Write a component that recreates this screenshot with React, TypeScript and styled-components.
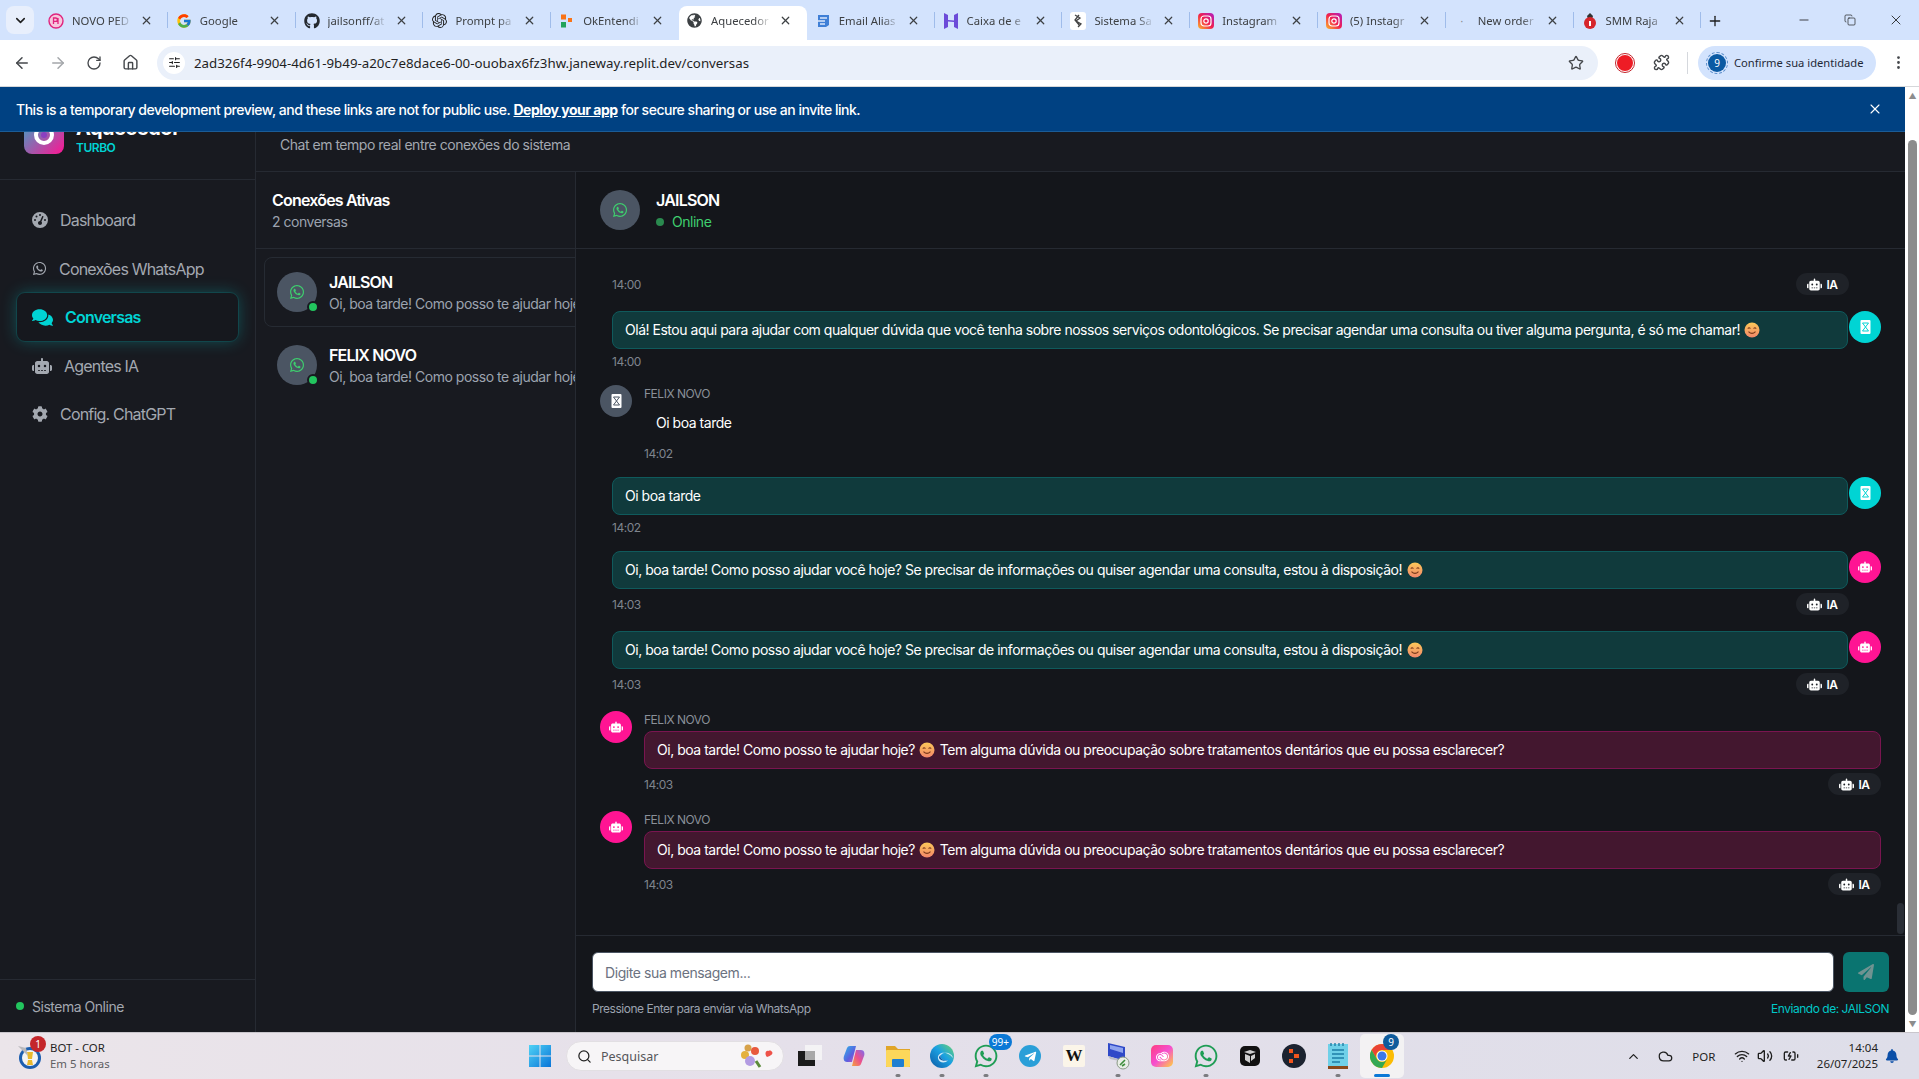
import { ReactNode } from "react"
import styled, { createGlobalStyle } from "styled-components"
import {
  ArrowLeft, ArrowRight, RotateCw, Home, Star, Puzzle, MoreVertical, SlidersHorizontal,
  X, Plus, ChevronDown, ChevronUp, Minus, Copy, Search, Cloud, Wifi, Volume2, BatteryCharging,
} from "lucide-react"
import {
  FaWhatsapp, FaComments, FaCog, FaPaperPlane, FaGithub,
  FaGlobeAmericas, FaTelegramPlane, FaBell,
} from "react-icons/fa"
import { FaGaugeHigh, FaRobot } from "react-icons/fa6"
import { FcGoogle } from "react-icons/fc"
import { SiOpenai, SiAdobecreativecloud } from "react-icons/si"

const UI = `"Noto Sans", "Open Sans", sans-serif`
// Inter runs wider here than in the capture, tighten it to the same line lengths
const TIGHT = "-0.03em"
const TIGHTER = "-0.05em"

const GlobalStyle = createGlobalStyle`
  html, body { margin: 0; padding: 0; height: 100%; overflow: hidden; background: #14161b; }
  body { font-family: Inter, "Liberation Sans", sans-serif; }
  * { box-sizing: border-box; }
`

const Window = styled.div`
  width: 1919px;
  height: 1079px;
  display: flex;
  flex-direction: column;
  overflow: hidden;
`

/* ---- browser chrome ---- */
const TabStrip = styled.div`
  height: 40px;
  flex: none;
  background: #d3e3fd;
  display: flex;
  align-items: flex-end;
  font-family: ${UI};
`
const TabMenu = styled.div`
  width: 28px;
  height: 28px;
  flex: none;
  margin: 0 6px 6px;
  border-radius: 8px;
  background: #e8effc;
  display: flex;
  align-items: center;
  justify-content: center;
  color: #1f1f1f;
`
const Tab = styled.div<{ $active?: boolean; $sep?: boolean }>`
  position: relative;
  flex: none;
  width: 127.8px;
  min-width: 0;
  height: 34px;
  padding: 0 15px 5px 8px;
  display: flex;
  align-items: center;
  gap: 8px;
  border-radius: 8px 8px 0 0;
  background: ${(p) => (p.$active ? "#fff" : "transparent")};
  &::after {
    content: "";
    display: ${(p) => (p.$sep ? "block" : "none")};
    position: absolute;
    right: 0;
    top: 6px;
    width: 1px;
    height: 16px;
    background: #9fbcea;
  }
`
const TabIcon = styled.span`
  width: 16px;
  height: 16px;
  flex: none;
  display: flex;
  align-items: center;
  justify-content: center;
`
const TabTitle = styled.span`
  flex: 1;
  min-width: 0;
  overflow: hidden;
  white-space: nowrap;
  font-size: 11.3px;
  color: #3d4043;
  -webkit-mask-image: linear-gradient(90deg, #000 72%, transparent 100%);
  mask-image: linear-gradient(90deg, #000 72%, transparent 100%);
`
const NewTab = styled.div`
  width: 28px;
  height: 34px;
  flex: none;
  padding-bottom: 5px;
  display: flex;
  align-items: center;
  justify-content: center;
  color: #1f1f1f;
`
const WindowControls = styled.div`
  margin-left: auto;
  height: 40px;
  flex: none;
  display: flex;
  color: #1f1f1f;
`
const WindowButton = styled.div`
  width: 46px;
  display: flex;
  align-items: center;
  justify-content: center;
`

const Toolbar = styled.div`
  height: 47px;
  flex: none;
  background: #fff;
  border-bottom: 1px solid #d5d7da;
  display: flex;
  align-items: center;
  padding: 0 3px 1px 4px;
  font-family: ${UI};
`
const ToolButton = styled.div<{ $dim?: boolean }>`
  width: 36px;
  height: 34px;
  flex: none;
  display: flex;
  align-items: center;
  justify-content: center;
  color: ${(p) => (p.$dim ? "#a4a7ab" : "#45484c")};
`
const Omnibox = styled.div`
  flex: 1;
  height: 34px;
  margin: 0 9px;
  border-radius: 17px;
  background: #eaf0fa;
  display: flex;
  align-items: center;
  padding: 0 14px 0 6px;
  gap: 9px;
`
const SiteChip = styled.div`
  width: 22px;
  height: 22px;
  border-radius: 50%;
  background: #fff;
  display: flex;
  align-items: center;
  justify-content: center;
  color: #1f1f1f;
`
const Url = styled.span`
  flex: 1;
  font-size: 13.3px;
  color: #1f1f1f;
`
const ToolSep = styled.div`
  width: 1px;
  height: 22px;
  margin: 0 10px 0 8px;
  background: #d5d8dd;
`
const RecordDot = styled.div`
  width: 16px;
  height: 16px;
  border-radius: 50%;
  background: #ee1c25;
  outline: 1.5px solid #c2242b;
  outline-offset: 1px;
`
const ProfilePill = styled.div`
  width: 178px;
  height: 34px;
  flex: none;
  margin-right: 4px;
  border-radius: 17px;
  background: #d3e3fd;
  display: flex;
  align-items: center;
  padding-left: 10px;
  gap: 8px;
  font-size: 11.2px;
  color: #1f2937;
  white-space: nowrap;
`
const ProfileAvatar = styled.div`
  width: 18px;
  height: 18px;
  border-radius: 50%;
  background: #0b5aa3;
  outline: 1px dashed #5b8ecb;
  outline-offset: 1px;
  color: #fff;
  font-size: 10px;
  line-height: 18px;
  text-align: center;
`

/* ---- page ---- */
const Viewport = styled.div`
  flex: 1;
  min-height: 0;
  display: flex;
`
const PageColumn = styled.div`
  flex: 1;
  min-width: 0;
  display: flex;
  flex-direction: column;
  letter-spacing: ${TIGHT};
`
const PageScrollbar = styled.div`
  width: 14px;
  flex: none;
  background: #fff;
  display: flex;
  flex-direction: column;
  align-items: center;
  padding: 5px 2px 4px 3px;
  color: #8d8d8d;
  font-size: 8px;
  line-height: 8px;
`
const PageThumb = styled.div`
  width: 9px;
  margin: 40px 0 5px;
  flex: 1;
  border-radius: 5px;
  background: #8c8c8c;
`
const Banner = styled.div`
  height: 45px;
  flex: none;
  background: #004182;
  border-bottom: 1px solid #1b5c96;
  color: #fff;
  display: flex;
  align-items: center;
  justify-content: space-between;
  padding: 0 22px 0 16px;
  font-size: 14px;
  font-weight: 500;
  a { color: #fff; font-weight: 700; text-decoration: underline; }
`
const AppFrame = styled.div`
  flex: 1;
  min-height: 0;
  display: flex;
  color: #fff;
`
const Sidebar = styled.aside`
  width: 256px;
  flex: none;
  background: #181a20;
  border-right: 1px solid #262a32;
  display: flex;
  flex-direction: column;
`
const Brand = styled.div`
  height: 48px;
  flex: none;
  overflow: hidden;
  border-bottom: 1px solid #262a32;
  padding: 0 0 25px 24px;
  display: flex;
  align-items: flex-end;
  gap: 12px;
`
const LogoMark = styled.div`
  width: 40px;
  height: 40px;
  flex: none;
  border-radius: 8px;
  background: linear-gradient(135deg, #2bb1c9, #ff1493);
  display: flex;
  align-items: center;
  justify-content: center;
`
const BrandName = styled.div`
  font-size: 20px;
  line-height: 24px;
  font-weight: 700;
`
const BrandTag = styled.div`
  font-size: 12px;
  line-height: 16px;
  font-weight: 600;
  color: #00d4d4;
  margin-bottom: -2px;
`
const Nav = styled.nav`
  padding: 16px 17px 0;
  display: flex;
  flex-direction: column;
  gap: 0.5px;
  letter-spacing: ${TIGHTER};
`
const NavItem = styled.div<{ $active?: boolean }>`
  height: 48px;
  border-radius: 8px;
  padding-left: 15px;
  display: flex;
  align-items: center;
  gap: 12px;
  font-size: 16px;
  color: ${(p) => (p.$active ? "#00d4d4" : "#a3a8b0")};
  font-weight: ${(p) => (p.$active ? 600 : 400)};
  background: ${(p) => (p.$active ? "#16181e" : "transparent")};
  box-shadow: ${(p) => (p.$active ? "0 0 16px rgba(0, 212, 212, 0.3)" : "none")};
  outline: ${(p) => (p.$active ? "1px solid rgba(0, 212, 212, 0.12)" : "none")};
`
const SidebarFooter = styled.div`
  margin-top: auto;
  height: 53px;
  border-top: 1px solid #262a32;
  padding-left: 16px;
  display: flex;
  align-items: center;
  gap: 8px;
  font-size: 14px;
  color: #a3a8b0;
`
const Dot = styled.span<{ $color: string }>`
  width: 8px;
  height: 8px;
  flex: none;
  border-radius: 50%;
  background: ${(p) => p.$color};
`
const Workspace = styled.main`
  flex: 1;
  min-width: 0;
  display: flex;
  flex-direction: column;
`
const PageHeader = styled.div`
  height: 40px;
  flex: none;
  padding: 3px 0 0 24px;
  background: #181a20;
  border-bottom: 1px solid #262a32;
  font-size: 14px;
  line-height: 20px;
  color: #a3a8b0;
`
const Panels = styled.div`
  flex: 1;
  min-height: 0;
  display: flex;
`
const ConnectionList = styled.section`
  width: 320px;
  flex: none;
  background: #181a20;
  border-right: 1px solid #262a32;
  overflow: hidden;
`
const ListHeader = styled.div`
  height: 77px;
  border-bottom: 1px solid #262a32;
  padding: 16px 16px 0;
`
const ListTitle = styled.div`
  font-size: 16px;
  line-height: 24px;
  font-weight: 600;
  letter-spacing: ${TIGHTER};
`
const MutedLine = styled.div`
  font-size: 14px;
  line-height: 20px;
  color: #9ca3af;
  white-space: nowrap;
`
const Cards = styled.div`
  padding: 8px 0 0 8px;
  display: flex;
  flex-direction: column;
  gap: 3px;
  width: 420px;
`
const ConnectionCard = styled.div<{ $selected?: boolean }>`
  height: 70px;
  padding-left: 12px;
  border-radius: 8px;
  border: 1px solid ${(p) => (p.$selected ? "#262b33" : "transparent")};
  display: flex;
  align-items: center;
  gap: 12px;
`
const Avatar = styled.div<{ $size: number; $bg: string }>`
  position: relative;
  width: ${(p) => p.$size}px;
  height: ${(p) => p.$size}px;
  flex: none;
  border-radius: 50%;
  background: ${(p) => p.$bg};
  display: flex;
  align-items: center;
  justify-content: center;
  color: #fff;
`
const StatusBadge = styled.span`
  position: absolute;
  right: -2px;
  bottom: -1px;
  width: 12px;
  height: 12px;
  border-radius: 50%;
  background: #22c55e;
  border: 2px solid #181a20;
`
const CardName = styled.div`
  font-size: 16px;
  line-height: 23px;
  font-weight: 600;
  letter-spacing: ${TIGHTER};
`
const ChatPane = styled.section`
  flex: 1;
  min-width: 0;
  background: #14161b;
  display: flex;
  flex-direction: column;
`
const ChatHeader = styled.div`
  height: 77px;
  flex: none;
  padding-left: 24px;
  border-bottom: 1px solid #262a32;
  display: flex;
  align-items: center;
  gap: 16px;
`
const ChatName = styled.div`
  font-size: 16px;
  line-height: 24px;
  font-weight: 600;
  letter-spacing: ${TIGHTER};
`
const Presence = styled.div`
  display: flex;
  align-items: center;
  gap: 8px;
  font-size: 14px;
  line-height: 20px;
  color: #3fcf6f;
`
const MessageList = styled.div`
  position: relative;
  flex: 1;
  min-height: 0;
  padding: 24px 24px 0;
  display: flex;
  flex-direction: column;
  gap: 16px;
  overflow: hidden;
`
const ChatThumb = styled.div`
  position: absolute;
  right: 1px;
  bottom: 1px;
  width: 7px;
  height: 31px;
  border-radius: 4px;
  background: #2a2e36;
`
const Row = styled.div`
  display: flex;
  gap: 12px;
`
const OutRow = styled.div`
  display: flex;
  gap: 1px;
  margin-left: 12px;
`
const Column = styled.div`
  flex: 1;
  min-width: 0;
`
const Sender = styled.div`
  font-size: 12px;
  line-height: 18px;
  margin-bottom: 2px;
  color: #8a9099;
`
const Bubble = styled.div<{ $tone: "teal" | "pink" | "plain" }>`
  flex: 1;
  font-size: 14px;
  line-height: 20px;
  border-radius: 8px;
  color: #fff;
  padding: 8px 12px;
  border: ${(p) => (p.$tone === "plain" ? "none" : "1px solid")};
  border-color: ${(p) => (p.$tone === "teal" ? "#0f5a5c" : "#7a1550")};
  background: ${(p) => (p.$tone === "teal" ? "#103a3c" : p.$tone === "pink" ? "#43172f" : "transparent")};
`
const Meta = styled.div<{ $out?: boolean; $first?: boolean }>`
  margin: ${(p) => (p.$first ? "0" : "4px")} ${(p) => (p.$out ? "32px" : "0")} 0 ${(p) => (p.$out ? "12px" : "0")};
  display: flex;
  align-items: center;
  justify-content: space-between;
  font-size: 12px;
  color: #7f858e;
`
const TimeLabel = styled.span`
  padding-top: 2px;
  line-height: 14px;
`
const AiBadge = styled.span`
  height: 22px;
  width: 53px;
  border-radius: 11px;
  background: #1f2228;
  display: flex;
  align-items: center;
  justify-content: center;
  gap: 4px;
  color: #fff;
  font-size: 12px;
  font-weight: 600;
`
const Composer = styled.div`
  height: 97px;
  flex: none;
  border-top: 1px solid #262a32;
  padding: 16px 16px 0;
`
const ComposerRow = styled.div`
  display: flex;
  gap: 9px;
`
const MessageInput = styled.input`
  flex: 1;
  height: 40px;
  border-radius: 6px;
  border: 1px solid #4b5563;
  background: #fff;
  padding: 0 12px;
  font: 14px Inter, sans-serif;
  letter-spacing: ${TIGHT};
  &::placeholder { color: #6b7280; }
`
const SendButton = styled.button`
  width: 46px;
  height: 40px;
  border: none;
  border-radius: 6px;
  background: #0a7470;
  color: #6f9391;
  display: flex;
  align-items: center;
  justify-content: center;
`
const ComposerHint = styled.div`
  margin-top: 9px;
  display: flex;
  justify-content: space-between;
  font-size: 12px;
  line-height: 16px;
  color: #9ca3af;
`
const SendingFrom = styled.span`
  color: #00c8c8;
`

/* ---- windows taskbar ---- */
const Taskbar = styled.footer`
  height: 47px;
  flex: none;
  display: flex;
  align-items: center;
  border-top: 1px solid #c9c6cc;
  background: linear-gradient(90deg, #ebe5ea, #e5e0ea 40%, #dedee9);
  font-family: ${UI};
`
const Weather = styled.div`
  width: 518px;
  flex: none;
  padding-left: 18px;
  display: flex;
  align-items: center;
  gap: 8px;
`
const WeatherIcon = styled.div`
  position: relative;
  width: 24px;
  height: 24px;
`
const RedBadge = styled.span`
  position: absolute;
  left: 12px;
  top: -8px;
  width: 16px;
  height: 16px;
  border-radius: 50%;
  background: #c4262b;
  color: #fff;
  font-size: 10px;
  line-height: 16px;
  text-align: center;
`
const WeatherText = styled.div`
  font-size: 11.4px;
  line-height: 16px;
  color: #1f1f1f;
  span { display: block; color: #5e5e62; }
`
const TaskSlot = styled.div<{ $active?: boolean }>`
  position: relative;
  width: 44px;
  height: 44px;
  flex: none;
  display: flex;
  align-items: center;
  justify-content: center;
  border-radius: 5px;
  background: ${(p) => (p.$active ? "#f3f2f3" : "transparent")};
`
const RunningDot = styled.span<{ $wide?: boolean }>`
  position: absolute;
  bottom: 1px;
  left: 50%;
  transform: translateX(-50%);
  width: ${(p) => (p.$wide ? "16px" : "5px")};
  height: 3px;
  border-radius: 2px;
  background: ${(p) => (p.$wide ? "#0a78d6" : "#7c7c80")};
`
const CountBadge = styled.span<{ $round?: boolean }>`
  position: absolute;
  top: 0;
  right: ${(p) => (p.$round ? "5px" : "-4px")};
  min-width: 16px;
  height: 16px;
  padding: 0 3px;
  border-radius: 8px;
  background: ${(p) => (p.$round ? "#0f5b9c" : "#0a78d6")};
  color: #fff;
  font-size: 10px;
  line-height: 16px;
  text-align: center;
`
const SearchBox = styled.div`
  width: 218px;
  height: 30px;
  margin: 0 4px;
  flex: none;
  border-radius: 15px;
  background: #f7f5f7;
  border: 1px solid #e2dfe3;
  display: flex;
  align-items: center;
  gap: 9px;
  padding: 0 8px 0 10px;
  font-size: 12.5px;
  color: #55565a;
  span { flex: 1; }
`
const Tray = styled.div`
  margin-left: auto;
  padding-right: 13px;
  display: flex;
  align-items: center;
  color: #1f1f1f;
  font-size: 11.5px;
`
const TrayIcon = styled.span<{ $w: number }>`
  width: ${(p) => p.$w}px;
  display: flex;
  justify-content: center;
`
const Clock = styled.div`
  text-align: right;
  line-height: 16px;
  margin-left: 8px;
`
const WBlock = styled.div`
  width: 22px;
  height: 22px;
  border-radius: 2px;
  background: #fbf5e9;
  color: #111;
  text-align: center;
  font: 700 17px/22px "Liberation Serif", serif;
`
const BadgeSquare = styled.div`
  width: 22px;
  height: 22px;
  border-radius: 5px;
  background: linear-gradient(135deg, #ff3d7f, #f54fd0 50%, #ffd23c);
  display: flex;
  align-items: center;
  justify-content: center;
`
const TelegramDisc = styled.div`
  width: 22px;
  height: 22px;
  border-radius: 50%;
  background: #2a9fd8;
  display: flex;
  align-items: center;
  justify-content: center;
`
const FaintDot = styled.span`
  color: #888;
  font-size: 10px;
`

/* ---- small drawings ---- */
const Tofu = ({ bg }: { bg: string }) => (
  <svg width="11" height="14" viewBox="0 0 11 14">
    <rect x="0.5" width="10" height="14" rx="1" fill="#fff" />
    <path d="M2.500 3l6 8M8.500 3l-6 8M2.500 3h6M2.500 11h6" stroke={bg} strokeWidth="1" fill="none" />
  </svg>
)

const LogoRing = () => (
  <svg width="24" height="24" viewBox="0 0 24 24">
    <circle cx="12" cy="13" r="8" fill="none" stroke="#fff" strokeWidth="4" />
    <circle cx="12" cy="13" r="3" fill="#8b3fc0" />
  </svg>
)

const Smile = () => (
  <svg width="16" height="16" viewBox="0 0 16 16" style={{ verticalAlign: -3, margin: "0 1px" }}>
    <defs>
      <linearGradient id="smile" x1="0" y1="0" x2="0" y2="1">
        <stop offset="0" stopColor="#fcc858" />
        <stop offset="1" stopColor="#f2866a" />
      </linearGradient>
    </defs>
    <circle cx="8" cy="8" r="7.500" fill="url(#smile)" />
    <path d="M3.800 6.600q1.300-1.600 2.600 0M9.600 6.600q1.300-1.600 2.600 0M4.500 9.600q3.500 3.600 7 0" stroke="#7a3a1a" strokeWidth="1.100" fill="none" />
  </svg>
)

const InstaIcon = () => (
  <svg width="16" height="16" viewBox="0 0 16 16">
    <defs>
      <linearGradient id="insta" x1="0" y1="1" x2="1" y2="0">
        <stop offset="0" stopColor="#fdb72b" />
        <stop offset="0.5" stopColor="#f0204f" />
        <stop offset="1" stopColor="#b01fc4" />
      </linearGradient>
    </defs>
    <rect width="16" height="16" rx="4" fill="url(#insta)" />
    <rect x="3" y="3" width="10" height="10" rx="3" fill="none" stroke="#fff" strokeWidth="1.200" />
    <circle cx="8" cy="8" r="2.200" fill="none" stroke="#fff" strokeWidth="1.200" />
  </svg>
)

const PedIcon = () => (
  <svg width="16" height="16" viewBox="0 0 16 16">
    <circle cx="8" cy="8" r="7" fill="#f7c6dd" stroke="#e0247e" strokeWidth="1.400" />
    <path d="M5.500 11V5h2.200a1.600 1.600 0 010 3.400H5.500M10 11V5" stroke="#e0247e" strokeWidth="1.300" fill="none" />
  </svg>
)

const OkIcon = () => (
  <svg width="16" height="16" viewBox="0 0 16 16">
    <rect x="2" y="1.500" width="5" height="5" fill="#f97316" />
    <rect x="9" y="5" width="4" height="4" fill="#f97316" />
    <rect x="2" y="9" width="5" height="5.500" fill="#22a35a" />
  </svg>
)

const MailIcon = () => (
  <svg width="16" height="16" viewBox="0 0 16 16">
    <path d="M3 2h11v10l-3 2H3z" fill="#3f7fd6" />
    <path d="M5 5h7M1 8h9M5 11h5" stroke="#dbe8fb" strokeWidth="1.300" />
  </svg>
)

const InboxIcon = () => (
  <svg width="16" height="18" viewBox="0 0 16 18">
    <path d="M1 1l4 2v5l6 .5V3l4-2v16l-4-2v-5l-6-.5V15l-4 2z" fill="#6c4bd8" />
  </svg>
)

const SaudeIcon = () => (
  <svg width="16" height="18" viewBox="0 0 16 18">
    <rect width="16" height="18" rx="3" fill="#fff" />
    <path d="M5 3l5 3-4 3 5 3-3 3M9 3L5 8l5 6" stroke="#444" strokeWidth="1.300" fill="none" />
  </svg>
)

const SmmIcon = () => (
  <svg width="16" height="18" viewBox="0 0 16 18">
    <path d="M8 1l3 3-1 3H6L5 4z" fill="#333" />
    <circle cx="8" cy="11" r="6" fill="#d6262c" />
    <path d="M7 9h2v5H7z" fill="#fff" />
  </svg>
)

const WinLogo = () => (
  <svg width="24" height="24" viewBox="0 0 24 24">
    <defs>
      <linearGradient id="win" x1="0" y1="0" x2="1" y2="1">
        <stop offset="0" stopColor="#4fd2f5" />
        <stop offset="1" stopColor="#0a74d8" />
      </linearGradient>
    </defs>
    <path d="M1 1h10.500v10.500H1zM12.500 1H23v10.500H12.500zM1 12.500h10.500V23H1zM12.500 12.500H23V23H12.500z" fill="url(#win)" />
  </svg>
)

const Flowers = () => (
  <svg width="38" height="28" viewBox="0 0 38 28">
    <circle cx="11" cy="6" r="3.500" fill="#d7a24a" />
    <circle cx="18" cy="9" r="4" fill="#e8583c" />
    <circle cx="8" cy="13" r="4" fill="#e4b13e" />
    <circle cx="13" cy="19" r="5" fill="#b39be2" />
    <path d="M19 19l4 6" stroke="#5c8a3c" strokeWidth="3" />
    <path d="M30 15c-3-3-1-7 1.500-6 1-.5 2.200-.8 3.500.8 1.500 2-1 4-5 5.200z" fill="#ee5249" />
  </svg>
)

const TaskView = () => (
  <svg width="24" height="24" viewBox="0 0 24 24">
    <rect x="7" y="1" width="17" height="15" fill="#f4f3f5" />
    <rect y="7" width="17" height="15" fill="#1b1b1b" />
    <rect x="7" y="7" width="10" height="9" fill="#a9a9a9" />
  </svg>
)

const Copilot = () => (
  <svg width="24" height="24" viewBox="0 0 24 24">
    <defs>
      <linearGradient id="cpA" x1="0" y1="0" x2="1" y2="1">
        <stop offset="0" stopColor="#2cb6e8" />
        <stop offset="0.6" stopColor="#5b5fe0" />
        <stop offset="1" stopColor="#d94fc0" />
      </linearGradient>
      <linearGradient id="cpB" x1="0" y1="1" x2="1" y2="0">
        <stop offset="0" stopColor="#f5a13c" />
        <stop offset="0.5" stopColor="#ec4f8e" />
        <stop offset="1" stopColor="#7b6cf0" />
      </linearGradient>
    </defs>
    <path d="M8 2h6l-4 16H5C2 18 1 15 2 12l3-8c.5-1.300 1.500-2 3-2z" fill="url(#cpA)" />
    <path d="M16 22h-6l4-16h5c3 0 4 3 3 6l-3 8c-.5 1.300-1.500 2-3 2z" fill="url(#cpB)" />
  </svg>
)

const Folder = () => (
  <svg width="24" height="24" viewBox="0 0 24 24">
    <path d="M0 2h9l3 3h12v18H0z" fill="#e0a528" />
    <rect y="6" width="24" height="17" rx="1" fill="#fcd75a" />
    <rect x="6" y="15" width="12" height="8" rx="1" fill="#1f7fd1" />
  </svg>
)

const Edge = () => (
  <svg width="24" height="24" viewBox="0 0 24 24">
    <defs>
      <linearGradient id="edge" x1="0" y1="1" x2="1" y2="0">
        <stop offset="0" stopColor="#0c59a4" />
        <stop offset="0.55" stopColor="#1ba1e2" />
        <stop offset="1" stopColor="#6fd66b" />
      </linearGradient>
    </defs>
    <circle cx="12" cy="12" r="12" fill="url(#edge)" />
    <path d="M23 14c-1-5-9-7-12-3-2 3 2 6 7 5.500-3 3-9 2.500-10-2-1-6 8-9 15-.5z" fill="#cfeaf8" />
    <path d="M11 11c-2 3 2 6 7 5.500-5 1-9-1-9-3 0-1 1-2 2-2.500z" fill="#0c59a4" />
  </svg>
)

const Remote = () => (
  <svg width="26" height="28" viewBox="0 0 26 28">
    <path d="M3 1l17 4v14L3 14z" fill="#2f49c8" />
    <path d="M5 3l13 3v5L5 7z" fill="#8ea3ef" />
    <path d="M3 14l17 5 3 2-18-4z" fill="#b9bcc8" />
    <circle cx="18" cy="21" r="6" fill="#e9eee6" stroke="#8a9a86" />
    <path d="M15 23l5-5M17 24l3-2" stroke="#3f8e3c" strokeWidth="1.600" />
  </svg>
)

const BlackApp = () => (
  <svg width="20" height="20" viewBox="0 0 20 20">
    <rect width="20" height="20" rx="5" fill="#111" />
    <path d="M4 6l6-2 6 2-6 2zM5 8l5 2v7l-5-3zM15 8l-4 2v5l4-3z" fill="#cfcfcf" />
  </svg>
)

const OrangeApp = () => (
  <svg width="24" height="24" viewBox="0 0 24 24">
    <circle cx="12" cy="12" r="12" fill="#1c2330" />
    <path d="M7 5h4v4H7zM12 10h5v4h-5zM7 15h4v4H7z" fill="#f2551d" />
  </svg>
)

const Notepad = () => (
  <svg width="20" height="26" viewBox="0 0 20 26">
    <rect y="1" width="20" height="22" fill="#6fd0e8" />
    <rect y="23" width="20" height="3" fill="#8a4a1c" />
    <path d="M4 7h12M4 11h12M4 15h12M4 19h8" stroke="#1e7ea6" strokeWidth="1.600" />
    <path d="M3 0v3M7 0v3M11 0v3M15 0v3" stroke="#1e7ea6" strokeWidth="1.400" />
  </svg>
)

const ChromeLogo = () => (
  <svg width="24" height="24" viewBox="0 0 24 24">
    <circle cx="12" cy="12" r="12" fill="#fbbc04" />
    <path d="M12 0a12 12 0 00-10.400 6l5.200 9A6 6 0 0112 6h10.400A12 12 0 0012 0z" fill="#ea4335" />
    <path d="M1.600 6A12 12 0 0012 24l5.200-9a6 6 0 01-10.400 0z" fill="#34a853" />
    <circle cx="12" cy="12" r="5.500" fill="#fff" />
    <circle cx="12" cy="12" r="4.500" fill="#3b78e7" />
  </svg>
)

const WeatherGlyph = () => (
  <svg width="24" height="28" viewBox="0 0 24 28" style={{ marginTop: -2 }}>
    <circle cx="12" cy="16" r="11" fill="#1d5fb0" />
    <circle cx="12" cy="16" r="8" fill="#f4f4f4" />
    <path d="M9 10h6l-1 7h-4zM10 18h4l1 5H9z" fill="#e9b92e" />
    <path d="M0 4l8 2 2 8z" fill="#b8b8bc" />
  </svg>
)

/* ---- data ---- */
const tabs: { title: string; icon: ReactNode; active?: boolean }[] = [
  { title: "NOVO PED", icon: <PedIcon /> },
  { title: "Google", icon: <FcGoogle size={16} /> },
  { title: "jailsonff/at", icon: <FaGithub size={16} color="#24292f" /> },
  { title: "Prompt pa", icon: <SiOpenai size={15} color="#222" /> },
  { title: "OkEntendi", icon: <OkIcon /> },
  { title: "Aquecedor", icon: <FaGlobeAmericas size={15} color="#3c4043" />, active: true },
  { title: "Email Alias", icon: <MailIcon /> },
  { title: "Caixa de e", icon: <InboxIcon /> },
  { title: "Sistema Sa", icon: <SaudeIcon /> },
  { title: "Instagram", icon: <InstaIcon /> },
  { title: "(5) Instagr", icon: <InstaIcon /> },
  { title: "New order", icon: <FaintDot>·</FaintDot> },
  { title: "SMM Raja", icon: <SmmIcon /> },
]

const taskApps: { icon: ReactNode; dot?: boolean; badge?: string }[] = [
  { icon: <TaskView /> },
  { icon: <Copilot /> },
  { icon: <Folder />, dot: true },
  { icon: <Edge />, dot: true },
  { icon: <FaWhatsapp size={26} color="#1f9d55" />, dot: true, badge: "99+" },
  { icon: <TelegramDisc><FaTelegramPlane size={13} color="#fff" /></TelegramDisc> },
  { icon: <WBlock>W</WBlock> },
  { icon: <Remote />, dot: true },
  { icon: <BadgeSquare><SiAdobecreativecloud size={13} color="#fff" /></BadgeSquare> },
  { icon: <FaWhatsapp size={26} color="#1f9d55" />, dot: true },
  { icon: <BlackApp /> },
  { icon: <OrangeApp /> },
  { icon: <Notepad />, dot: true },
]

const TEAL = "#00d4d4"
const PINK = "#ff1493"
const GREY = "#4b5563"
const GREETING = <>Oi, boa tarde! Como posso ajudar você hoje? Se precisar de informações ou quiser agendar uma consulta, estou à disposição! <Smile /></>
const PINK_TEXT = <>Oi, boa tarde! Como posso te ajudar hoje? <Smile /> Tem alguma dúvida ou preocupação sobre tratamentos dentários que eu possa esclarecer?</>

const Ia = () => (
  <AiBadge><FaRobot size={15} /> IA</AiBadge>
)

const Outgoing = ({ text, icon, bg, time, ia }: { text: ReactNode; icon: ReactNode; bg: string; time: string; ia?: boolean }) => (
  <div>
    <OutRow>
      <Bubble $tone="teal">{text}</Bubble>
      <Avatar $size={32} $bg={bg}>{icon}</Avatar>
    </OutRow>
    <Meta $out><TimeLabel>{time}</TimeLabel>{ia && <Ia />}</Meta>
  </div>
)

const Incoming = ({ text, icon, bg, tone, ia }: { text: ReactNode; icon: ReactNode; bg: string; tone: "pink" | "plain"; ia?: boolean }) => (
  <Row>
    <Avatar $size={32} $bg={bg}>{icon}</Avatar>
    <Column>
      <Sender>FELIX NOVO</Sender>
      <Bubble $tone={tone}>{text}</Bubble>
      <Meta><TimeLabel>{tone === "plain" ? "14:02" : "14:03"}</TimeLabel>{ia && <Ia />}</Meta>
    </Column>
  </Row>
)

export default function App() {
  return (
    <Window>
      <GlobalStyle />
      <TabStrip>
        <TabMenu><ChevronDown size={15} strokeWidth={2.5} /></TabMenu>
        {tabs.map((t, i) => (
          <Tab key={t.title} $active={t.active} $sep={!t.active && tabs[i + 1]?.active !== true}>
            <TabIcon>{t.icon}</TabIcon>
            <TabTitle>{t.title}</TabTitle>
            <X size={13} color="#3d4043" strokeWidth={2.2} />
          </Tab>
        ))}
        <NewTab><Plus size={16} /></NewTab>
        <WindowControls>
          <WindowButton><Minus size={14} strokeWidth={1.4} /></WindowButton>
          <WindowButton><Copy size={12} strokeWidth={1.4} /></WindowButton>
          <WindowButton><X size={16} strokeWidth={1.3} /></WindowButton>
        </WindowControls>
      </TabStrip>
      <Toolbar>
        <ToolButton><ArrowLeft size={18} /></ToolButton>
        <ToolButton $dim><ArrowRight size={18} /></ToolButton>
        <ToolButton><RotateCw size={16} /></ToolButton>
        <ToolButton><Home size={17} /></ToolButton>
        <Omnibox>
          <SiteChip><SlidersHorizontal size={13} /></SiteChip>
          <Url>2ad326f4-9904-4d61-9b49-a20c7e8dace6-00-ouobax6fz3hw.janeway.replit.dev/conversas</Url>
          <Star size={16} color="#45484c" />
        </Omnibox>
        <ToolButton><RecordDot /></ToolButton>
        <ToolButton><Puzzle size={17} /></ToolButton>
        <ToolSep />
        <ProfilePill><ProfileAvatar>9</ProfileAvatar>Confirme sua identidade</ProfilePill>
        <ToolButton><MoreVertical size={17} /></ToolButton>
      </Toolbar>
      <Viewport>
        <PageColumn>
          <Banner>
            <span>This is a temporary development preview, and these links are not for public use. <a>Deploy your app</a> for secure sharing or use an invite link.</span>
            <X size={16} strokeWidth={1.6} />
          </Banner>
          <AppFrame>
            <Sidebar>
              <Brand>
                <LogoMark><LogoRing /></LogoMark>
                <div>
                  <BrandName>Aquecedor</BrandName>
                  <BrandTag>TURBO</BrandTag>
                </div>
              </Brand>
              <Nav>
                <NavItem><FaGaugeHigh size={16} />Dashboard</NavItem>
                <NavItem><FaWhatsapp size={15} />Conexões WhatsApp</NavItem>
                <NavItem $active><FaComments size={21} />Conversas</NavItem>
                <NavItem><FaRobot size={20} />Agentes IA</NavItem>
                <NavItem><FaCog size={16} />Config. ChatGPT</NavItem>
              </Nav>
              <SidebarFooter><Dot $color="#22c55e" />Sistema Online</SidebarFooter>
            </Sidebar>
            <Workspace>
              <PageHeader>Chat em tempo real entre conexões do sistema</PageHeader>
              <Panels>
                <ConnectionList>
                  <ListHeader>
                    <ListTitle>Conexões Ativas</ListTitle>
                    <MutedLine>2 conversas</MutedLine>
                  </ListHeader>
                  <Cards>
                    <ConnectionCard $selected>
                      <Avatar $size={40} $bg={GREY}><FaWhatsapp size={16} color="#3ecf6e" /><StatusBadge /></Avatar>
                      <div>
                        <CardName>JAILSON</CardName>
                        <MutedLine>Oi, boa tarde! Como posso te ajudar hoje?</MutedLine>
                      </div>
                    </ConnectionCard>
                    <ConnectionCard>
                      <Avatar $size={40} $bg={GREY}><FaWhatsapp size={16} color="#3ecf6e" /><StatusBadge /></Avatar>
                      <div>
                        <CardName>FELIX NOVO</CardName>
                        <MutedLine>Oi, boa tarde! Como posso te ajudar hoje?</MutedLine>
                      </div>
                    </ConnectionCard>
                  </Cards>
                </ConnectionList>
                <ChatPane>
                  <ChatHeader>
                    <Avatar $size={40} $bg={GREY}><FaWhatsapp size={16} color="#3ecf6e" /></Avatar>
                    <div>
                      <ChatName>JAILSON</ChatName>
                      <Presence><Dot $color="#2a8a4f" />Online</Presence>
                    </div>
                  </ChatHeader>
                  <MessageList>
                    <Meta $out $first><TimeLabel>14:00</TimeLabel><Ia /></Meta>
                    <Outgoing bg={TEAL} icon={<Tofu bg={TEAL} />} time="14:00" text={<>Olá! Estou aqui para ajudar com qualquer dúvida que você tenha sobre nossos serviços odontológicos. Se precisar agendar uma consulta ou tiver alguma pergunta, é só me chamar! <Smile /></>} />
                    <Incoming bg={GREY} icon={<Tofu bg={GREY} />} tone="plain" text="Oi boa tarde" />
                    <Outgoing bg={TEAL} icon={<Tofu bg={TEAL} />} time="14:02" text="Oi boa tarde" />
                    <Outgoing bg={PINK} icon={<FaRobot size={14} />} time="14:03" ia text={GREETING} />
                    <Outgoing bg={PINK} icon={<FaRobot size={14} />} time="14:03" ia text={GREETING} />
                    <Incoming bg={PINK} icon={<FaRobot size={14} />} tone="pink" ia text={PINK_TEXT} />
                    <Incoming bg={PINK} icon={<FaRobot size={14} />} tone="pink" ia text={PINK_TEXT} />
                    <ChatThumb />
                  </MessageList>
                  <Composer>
                    <ComposerRow>
                      <MessageInput placeholder="Digite sua mensagem..." />
                      <SendButton><FaPaperPlane size={16} /></SendButton>
                    </ComposerRow>
                    <ComposerHint>
                      <span>Pressione Enter para enviar via WhatsApp</span>
                      <SendingFrom>Enviando de: JAILSON</SendingFrom>
                    </ComposerHint>
                  </Composer>
                </ChatPane>
              </Panels>
            </Workspace>
          </AppFrame>
        </PageColumn>
        <PageScrollbar>▲<PageThumb />▼</PageScrollbar>
      </Viewport>
      <Taskbar>
        <Weather>
          <WeatherIcon><WeatherGlyph /><RedBadge>1</RedBadge></WeatherIcon>
          <WeatherText>BOT - COR<span>Em 5 horas</span></WeatherText>
        </Weather>
        <TaskSlot><WinLogo /></TaskSlot>
        <SearchBox><Search size={15} color="#222" /><span>Pesquisar</span><Flowers /></SearchBox>
        {taskApps.map((a, i) => (
          <TaskSlot key={i}>
            {a.icon}
            {a.badge && <CountBadge>{a.badge}</CountBadge>}
            {a.dot && <RunningDot />}
          </TaskSlot>
        ))}
        <TaskSlot $active>
          <ChromeLogo />
          <CountBadge $round>9</CountBadge>
          <RunningDot $wide />
        </TaskSlot>
        <Tray>
          <TrayIcon $w={34}><ChevronUp size={15} /></TrayIcon>
          <TrayIcon $w={30}><Cloud size={15} /></TrayIcon>
          <TrayIcon $w={46}>POR</TrayIcon>
          <TrayIcon $w={30}><Wifi size={16} /></TrayIcon>
          <TrayIcon $w={16}><Volume2 size={16} /></TrayIcon>
          <TrayIcon $w={36}><BatteryCharging size={16} /></TrayIcon>
          <Clock>14:04<br />26/07/2025</Clock>
          <TrayIcon $w={28}><FaBell size={14} color="#0b4fa8" /></TrayIcon>
        </Tray>
      </Taskbar>
    </Window>
  )
}
